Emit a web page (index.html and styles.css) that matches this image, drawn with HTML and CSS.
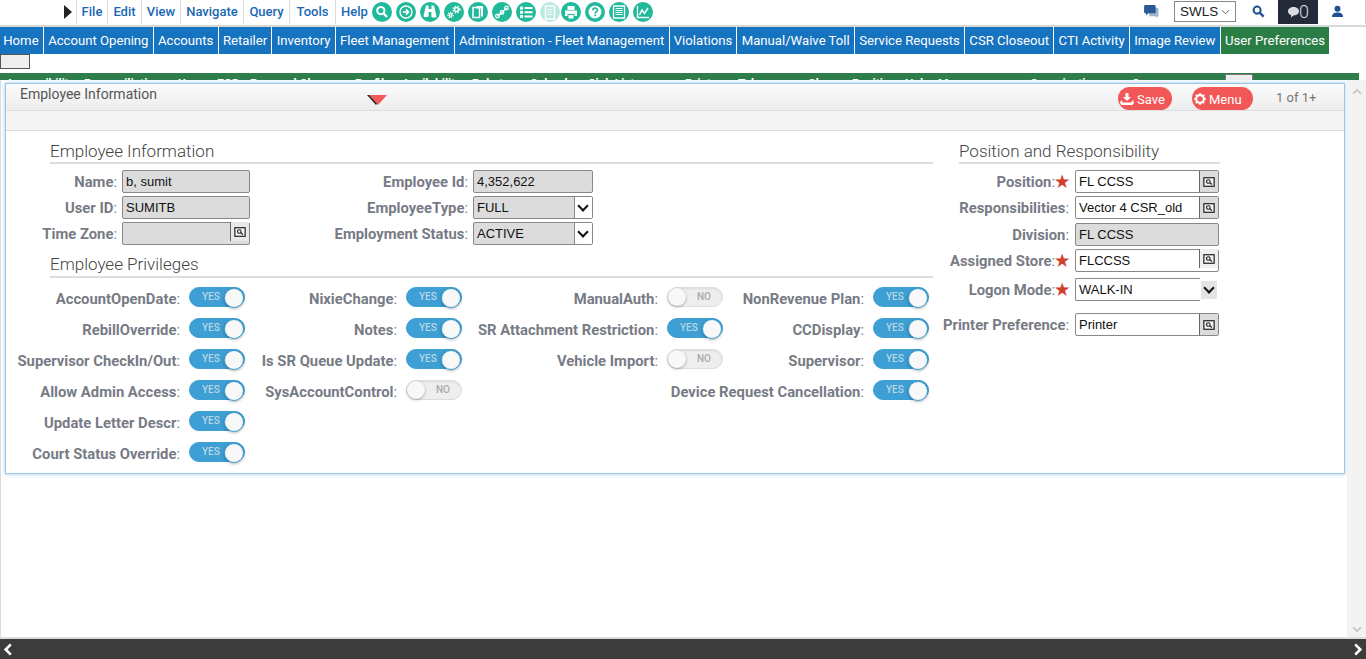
FILE: index.html
```html
<!DOCTYPE html>
<html lang="en">
<head>
  <meta charset="UTF-8" />
  <title>Employee Information</title>
  <link rel="stylesheet" href="styles.css">
</head>
<body>
  <svg class="sprites" aria-hidden="true">
    <symbol id="ic-look" viewBox="0 0 14 14">
      <rect x="1" y="2" width="12" height="10" fill="#f4f4f4" stroke="#222" stroke-width="1.4"/>
      <circle cx="6.2" cy="6.4" r="2.1" fill="none" stroke="#222" stroke-width="1.3"/>
      <path d="M8 8l2.4 2" stroke="#222" stroke-width="1.5"/>
    </symbol>
  </svg>

  <header class="toolbar">
    <span class="run-arrow"></span>
    <ul class="file-menu">
      <li>File</li><li>Edit</li><li>View</li><li>Navigate</li><li>Query</li><li>Tools</li><li>Help</li>
    </ul>
    <div class="tool-icons">
      <svg class="tool" viewBox="0 0 20 20"><circle cx="10" cy="10" r="10"/><circle cx="8.8" cy="8.6" r="3.6" fill="none" stroke="#fff" stroke-width="2"/><path d="M11.5 11.4l3.6 3.6" stroke="#fff" stroke-width="2.4"/></svg>
      <svg class="tool" viewBox="0 0 20 20"><circle cx="10" cy="10" r="10"/><circle cx="10" cy="10" r="6" fill="none" stroke="#fff" stroke-width="1.4"/><path d="M6.8 10h5.4M10 7.4l2.6 2.6-2.6 2.6" fill="none" stroke="#fff" stroke-width="1.5"/></svg>
      <svg class="tool" viewBox="0 0 20 20"><circle cx="10" cy="10" r="10"/><path d="M6 3.5h2.6v3.4h2.8V3.500H14l2.400 10.500c.2 1-.4 1.500-1.200 1.500h-2.700c-.8 0-1.100-.5-1.100-1.200V10H8.600v3.800c0 .7-.3 1.200-1.100 1.200H4.800c-.8 0-1.400-.5-1.200-1.500z" fill="#fff"/></svg>
      <svg class="tool" viewBox="0 0 20 20"><circle cx="10" cy="10" r="10"/><circle cx="12.5" cy="7.5" r="2" fill="none" stroke="#fff" stroke-width="1.6"/><circle cx="12.5" cy="7.5" r="3.4" fill="none" stroke="#fff" stroke-width="1.4" stroke-dasharray="1.4 1.4"/><circle cx="6.5" cy="13" r="1.4" fill="none" stroke="#fff" stroke-width="1.3"/><circle cx="6.5" cy="13" r="2.6" fill="none" stroke="#fff" stroke-width="1.2" stroke-dasharray="1.2 1.1"/></svg>
      <svg class="tool" viewBox="0 0 20 20"><circle cx="10" cy="10" r="10"/><path d="M5 5.500h6.500v10H5z" fill="none" stroke="#fff" stroke-width="1.5"/><path d="M8.500 4H15v10.500h-2V6.500H8.500z" fill="#fff"/></svg>
      <svg class="tool" viewBox="0 0 20 20"><circle cx="10" cy="10" r="10"/><path d="M5.500 14l4-3 2-2 3-3" stroke="#fff" stroke-width="1.2"/><circle cx="5.500" cy="14" r="1.800" fill="none" stroke="#fff" stroke-width="1.3"/><circle cx="10" cy="10.500" r="1.800" fill="none" stroke="#fff" stroke-width="1.3"/><circle cx="14.500" cy="6" r="1.800" fill="none" stroke="#fff" stroke-width="1.3"/></svg>
      <svg class="tool" viewBox="0 0 20 20"><circle cx="10" cy="10" r="10"/><path d="M4 4.500h3v3H4zM4 8.700h3v3H4zM4 13h3v3H4zM8.500 5h8v2h-8zM8.500 9.200h8v2h-8zM8.500 13.500h8v2h-8z" fill="#fff"/></svg>
      <svg class="tool tool-off" viewBox="0 0 20 20"><circle cx="10" cy="10" r="10"/><path d="M5.500 4h9v13h-9z" fill="none" stroke="#fff" stroke-width="1.4"/><path d="M7.500 7.500h5M7.500 10h5M7.500 12.500h5" stroke="#fff"/></svg>
      <svg class="tool tool-tight" viewBox="0 0 20 20"><circle cx="10" cy="10" r="10"/><path d="M6.500 4h7v4h-7zM4 8.500h12V14h-2.500v-2h-7v2H4zM7.500 13h5v3.500h-5z" fill="#fff"/></svg>
      <svg class="tool" viewBox="0 0 20 20"><circle cx="10" cy="10" r="10"/><circle cx="10" cy="10" r="6.500" fill="#fff"/><path d="M7.800 8.300c0-3 4.600-3 4.600-.1 0 1.700-2.200 1.700-2.200 3.300" fill="none" stroke="#20b99a" stroke-width="1.7"/><path d="M9.300 12.500h1.800v1.700H9.300z" fill="#20b99a"/></svg>
      <svg class="tool" viewBox="0 0 20 20"><circle cx="10" cy="10" r="10"/><path d="M4.500 4h11v12h-11z" fill="none" stroke="#fff" stroke-width="1.3"/><path d="M6.500 6.500h7M6.500 8.500h7M6.500 10.500h7M6.500 12.500h7" stroke="#fff" stroke-width="1.1"/></svg>
      <svg class="tool" viewBox="0 0 20 20"><circle cx="10" cy="10" r="10"/><path d="M4.500 4v11.500H16" fill="none" stroke="#fff" stroke-width="1.3"/><path d="M6.500 13L9 8l2.500 3.500L15 6" fill="none" stroke="#fff" stroke-width="1.5"/></svg>
    </div>
    <div class="tool-right">
      <svg class="chat-ic" viewBox="0 0 16 14"><path d="M4 3h10a1.500 1.500 0 0 1 1.500 1.500v6c0 .8-.5 1.300-1 1.500v2L12 12H6z" fill="#9db4cc"/><path d="M1.500 0H11a1.500 1.500 0 0 1 1.500 1.500v6A1.500 1.500 0 0 1 11 9H4.500L2 11.200V9h-.5A1.500 1.500 0 0 1 0 7.500v-6A1.500 1.500 0 0 1 1.500 0z" fill="#2a5a94"/></svg>
      <div class="site-select"><span>SWLS</span><svg viewBox="0 0 10 6"><path d="M1 1l4 4 4-4" fill="none" stroke="#555"/></svg></div>
      <svg class="find-ic" viewBox="0 0 14 14"><circle cx="5.500" cy="5.500" r="3.800" fill="none" stroke="#1f5190" stroke-width="2.2"/><path d="M8.500 8.500l4 4" stroke="#1f5190" stroke-width="2.6"/></svg>
      <div class="msg-box"><svg viewBox="0 0 12 12"><path d="M6.500 1C9.500 1 12 2.800 12 5.200S9.500 9.400 6.500 9.400L4 11.500V9C2 8.400 1 6.900 1 5.200 1 2.800 3.500 1 6.500 1z" fill="#d8dce2"/></svg><span>0</span></div>
      <svg class="user-ic" viewBox="0 0 14 14"><circle cx="7" cy="4" r="3.200" fill="#1f5190"/><path d="M1 13c0-3.500 2.500-5 6-5s6 1.500 6 5z" fill="#1f5190"/></svg>
    </div>
  </header>

  <nav class="main-nav">
    <a>Home</a><a>Account Opening</a><a>Accounts</a><a>Retailer</a><a>Inventory</a><a>Fleet Management</a><a>Administration - Fleet Management</a><a>Violations</a><a>Manual/Waive Toll</a><a>Service Requests</a><a>CSR Closeout</a><a>CTI Activity</a><a>Image Review</a><a class="active">User Preferences</a>
  </nav>
  <div class="nav-extra"><button class="more-btn" type="button"></button></div>
  <div class="sub-nav">
    <span>Accessibility</span><span>Reconciliation</span><span>User</span><span>EOD</span><span>Reversal Charge</span><span>Profile</span><span>Availability</span><span>Rebates</span><span>Calendar</span><span>Sink List</span><span>Printer</span><span>Tabs</span><span>Charge</span><span>Position</span><span>Help</span><span>Messages</span><span>Organization</span><span>Summary</span><i class="sub-more"></i>
  </div>

  <div class="work-area">
    <main class="content">
      <section class="panel">
        <div class="panel-head">
          <h2>Employee Information</h2>
          <span class="collapse-mark"></span>
          <button class="pill pill-save" type="button">
            <svg viewBox="0 0 14 14"><path d="M5.500 1h3v4H11L7 9 3 5h2.500zM1 8l2 2.500h8L13 8l1 3-1.500 2h-11L0 11z" fill="#fff"/></svg>Save
          </button>
          <button class="pill pill-menu" type="button">
            <svg viewBox="0 0 14 14"><circle cx="7" cy="7" r="4.500" fill="none" stroke="#fff" stroke-width="2.6"/><path d="M7 0v14M0 7h14M2 2l10 10M12 2L2 12" stroke="#fff" stroke-width="1.8" stroke-dasharray="2.2 9.6 2.2"/></svg>Menu
          </button>
          <span class="pager">1 of 1+</span>
        </div>
        <div class="panel-strip"></div>

        <div class="panel-body">
          <div class="col-main">
            <h3 class="sec-title">Employee Information</h3>
            <div class="info-grid">
              <label class="fld-label">Name<i>:</i></label>
              <div class="field ro">b, sumit</div>
              <label class="fld-label">Employee Id<i>:</i></label>
              <div class="field ro">4,352,622</div>

              <label class="fld-label">User ID<i>:</i></label>
              <div class="field ro">SUMITB</div>
              <label class="fld-label">EmployeeType<i>:</i></label>
              <div class="field ro has-drop">FULL<span class="drop"></span></div>

              <label class="fld-label">Time Zone<i>:</i></label>
              <div class="field ro has-look look-raised"><span class="look"><svg><use href="#ic-look"/></svg></span></div>
              <label class="fld-label">Employment Status<i>:</i></label>
              <div class="field ro has-drop">ACTIVE<span class="drop"></span></div>
            </div>

            <h3 class="sec-title sec-priv">Employee Privileges</h3>
            <div class="priv-grid">
              <label class="fld-label">AccountOpenDate<i>:</i></label><span class="switch on"><b>YES</b></span>
              <label class="fld-label">NixieChange<i>:</i></label><span class="switch on"><b>YES</b></span>
              <label class="fld-label">ManualAuth<i>:</i></label><span class="switch"><b>NO</b></span>
              <label class="fld-label">NonRevenue Plan<i>:</i></label><span class="switch on"><b>YES</b></span>

              <label class="fld-label">RebillOverride<i>:</i></label><span class="switch on"><b>YES</b></span>
              <label class="fld-label">Notes<i>:</i></label><span class="switch on"><b>YES</b></span>
              <label class="fld-label">SR Attachment Restriction<i>:</i></label><span class="switch on"><b>YES</b></span>
              <label class="fld-label">CCDisplay<i>:</i></label><span class="switch on"><b>YES</b></span>

              <label class="fld-label">Supervisor CheckIn/Out<i>:</i></label><span class="switch on"><b>YES</b></span>
              <label class="fld-label">Is SR Queue Update<i>:</i></label><span class="switch on"><b>YES</b></span>
              <label class="fld-label">Vehicle Import<i>:</i></label><span class="switch"><b>NO</b></span>
              <label class="fld-label">Supervisor<i>:</i></label><span class="switch on"><b>YES</b></span>

              <label class="fld-label">Allow Admin Access<i>:</i></label><span class="switch on"><b>YES</b></span>
              <label class="fld-label">SysAccountControl<i>:</i></label><span class="switch"><b>NO</b></span>
              <label class="fld-label wide-label">Device Request Cancellation<i>:</i></label><span class="switch on"><b>YES</b></span>

              <label class="fld-label">Update Letter Descr<i>:</i></label><span class="switch on row-end"><b>YES</b></span>
              <label class="fld-label">Court Status Override<i>:</i></label><span class="switch on row-end"><b>YES</b></span>
            </div>
          </div>

          <div class="col-side">
            <h3 class="sec-title">Position and Responsibility</h3>
            <div class="side-grid">
              <label class="fld-label req">Position<i>:</i><em>★</em></label>
              <div class="field has-look">FL CCSS<span class="look"><svg><use href="#ic-look"/></svg></span></div>

              <label class="fld-label">Responsibilities<i>:</i></label>
              <div class="field has-look">Vector 4 CSR_old<span class="look"><svg><use href="#ic-look"/></svg></span></div>

              <label class="fld-label gap-div">Division<i>:</i></label>
              <div class="field ro gap-div">FL CCSS</div>

              <label class="fld-label req">Assigned Store<i>:</i><em>★</em></label>
              <div class="field has-look look-raised">FLCCSS<span class="look"><svg><use href="#ic-look"/></svg></span></div>

              <label class="fld-label req gap-logon">Logon Mode<i>:</i><em>★</em></label>
              <div class="field-logon gap-logon"><div class="field open-right">WALK-IN</div><span class="logon-drop"></span></div>

              <label class="fld-label gap-printer">Printer Preference<i>:</i></label>
              <div class="field has-look gap-printer">Printer<span class="look"><svg><use href="#ic-look"/></svg></span></div>
            </div>
          </div>
        </div>
      </section>
    </main>
    <aside class="scroll-rail">
      <svg viewBox="0 0 12 8"><path d="M1.500 6.500L6 2l4.500 4.500" fill="none" stroke="#c4c4c4" stroke-width="2"/></svg>
      <svg viewBox="0 0 12 8"><path d="M1.500 1.500L6 6l4.500-4.500" fill="none" stroke="#c4c4c4" stroke-width="2"/></svg>
    </aside>
  </div>

  <footer class="foot-bar">
    <svg viewBox="0 0 10 14"><path d="M8 1.500L2.500 7 8 12.500" fill="none" stroke="#fff" stroke-width="2.8"/></svg>
    <svg viewBox="0 0 10 14"><path d="M2 1.500L7.500 7 2 12.500" fill="none" stroke="#fff" stroke-width="2.8"/></svg>
  </footer>
</body>
</html>
```

FILE: styles.css
```css
* {
  box-sizing: border-box;
}
html, body {
  height: 100%;
}
body {
  margin: 0;
  display: flex;
  flex-direction: column;
  overflow: hidden;
  background-color: white;
  font-family: Roboto, "Liberation Sans", sans-serif;
  color: #333;
}
.sprites {
  display: none;
}

/* top toolbar */
.toolbar {
  display: flex;
  align-items: center;
  height: 27px;
  flex: none;
  padding-bottom: 2px;
  border-bottom: 2px solid #d8d8d8;
}
.run-arrow {
  width: 0;
  height: 0;
  margin-left: 64px;
  border-left: 8px solid #222;
  border-top: 7px solid transparent;
  border-bottom: 7px solid transparent;
}
.file-menu {
  display: flex;
  margin: 0 0 0 4px;
  padding: 0;
  list-style: none;
  height: 25px;
}
.file-menu li {
  display: flex;
  align-items: center;
  justify-content: center;
  border-left: 1px solid #ddd;
  font-size: 13px;
  font-weight: 500;
  color: #1a68b5;
  padding: 0 4px;
}
.file-menu li:nth-child(1) { width: 31px; }
.file-menu li:nth-child(2) { width: 34px; }
.file-menu li:nth-child(3) { width: 39px; }
.file-menu li:nth-child(4) { width: 63px; }
.file-menu li:nth-child(5) { width: 46px; }
.file-menu li:nth-child(6) { width: 46px; }
.file-menu li:nth-child(7) { width: 38px; }
.tool-icons {
  display: flex;
  gap: 4px;
  margin-left: -1px;
}
.tool {
  width: 20px;
  height: 20px;
  fill: #20b99a;
}
.tool-off {
  opacity: 0.3;
}
.tool-tight {
  margin-left: -3px;
}
.tool-right {
  display: flex;
  align-items: center;
  margin-left: auto;
  height: 25px;
  padding-right: 6px;
  border-right: 1px solid #ccc;
}
.chat-ic {
  width: 15px;
  height: 13px;
  margin-right: 15px;
}
.site-select {
  display: flex;
  align-items: center;
  justify-content: space-between;
  width: 62px;
  height: 21px;
  padding: 0 5px;
  border: 1px solid #888;
  font-family: "Liberation Sans", sans-serif;
  font-size: 13.5px;
  color: #222;
}
.site-select svg {
  width: 9px;
  height: 6px;
}
.find-ic {
  width: 13px;
  height: 13px;
  margin: 0 13px 0 16px;
}
.msg-box {
  display: flex;
  align-items: center;
  justify-content: center;
  width: 40px;
  height: 25px;
  background-color: #232b3b;
  color: #d8dce2;
  font-size: 18px;
  font-weight: 300;
}
.msg-box svg {
  width: 12px;
  height: 12px;
}
.user-ic {
  width: 13px;
  height: 13px;
  margin: 0 15px 0 13px;
}

/* main navigation */
.main-nav {
  display: flex;
  height: 27px;
  flex: none;
}
.main-nav a {
  display: flex;
  align-items: center;
  padding: 0 4.25px;
  border-right: 1px solid white;
  background-color: #1673c0;
  color: white;
  font-size: 13.15px;
  white-space: nowrap;
}
.main-nav a:first-child {
  padding-left: 3.25px;
}
.main-nav a.active {
  background-color: #2b7d46;
}
.nav-extra {
  height: 19px;
  flex: none;
}
.more-btn {
  display: block;
  width: 30px;
  height: 15px;
  padding: 0;
  border: 1px solid #555;
  background-color: #eee;
}
.sub-nav {
  display: grid;
  grid-template-columns: 78px 94px 39px 33px 105px 47px 70px 58px 58px 97px 53px 70px 44px 53px 33px 92px 102px 93px 28px;
  height: 7px;
  flex: none;
  margin-right: 7px;
  padding: 4px 0 0 6px;
  overflow: hidden;
  background-color: #2e7d4a;
  color: white;
  font-size: 12px;
  font-weight: 700;
  line-height: 14px;
  white-space: nowrap;
}
.sub-nav span {
  height: 3px;
  overflow: hidden;
}
.sub-more {
  display: block;
  height: 14px;
  margin-top: -3px;
  background-color: #eee;
  border: 1px solid #777;
}

/* work area */
.work-area {
  display: flex;
  flex: 1;
  min-height: 0;
}
.content {
  flex: 1;
  padding: 3px 2px 0 4px;
  border-left: 1px solid #ddd;
  border-bottom: 2px solid #ddd;
}
.panel {
  height: 391px;
  background-color: white;
  border: 1px solid #9cc6e8;
  box-shadow: 0 0 4px rgba(90, 160, 220, 0.6);
}
.panel-head {
  display: flex;
  align-items: flex-start;
  height: 27px;
  padding-top: 3px;
  border-bottom: 1px solid #ddd;
  background: linear-gradient(#fbfbfb, #ededed);
}
.panel-head h2 {
  margin: -1px 0 0 14px;
  font-size: 14px;
  font-weight: 400;
  color: #555;
}
.collapse-mark {
  width: 0;
  height: 0;
  margin: 8px 0 0 212px;
  border-left: 9px solid transparent;
  border-right: 9px solid transparent;
  border-top: 10px solid #f25b5b;
  filter: drop-shadow(-2px 0 0 #222);
}
.pill {
  display: flex;
  align-items: center;
  gap: 3px;
  height: 23px;
  padding: 1px 0 0 2px;
  border: none;
  border-radius: 12px;
  background-color: #f25757;
  color: white;
  font-family: Roboto, sans-serif;
  font-size: 13px;
}
.pill-save {
  width: 54px;
  margin-left: 731px;
}
.pill-save svg {
  width: 14px;
  height: 14px;
}
.pill-menu {
  width: 61px;
  margin-left: 20px;
}
.pill-menu svg {
  width: 12px;
  height: 12px;
}
.pager {
  margin: 3px 0 0 23px;
  font-size: 13px;
  color: #777;
}
.panel-strip {
  height: 20px;
  background-color: #f5f5f5;
  border-bottom: 1px solid #ddd;
}
.panel-body {
  display: flex;
}
.col-main {
  width: 927px;
}
.col-side {
  width: 261px;
  margin-left: 26px;
}
.sec-title {
  height: 33px;
  margin: 0 0 6px;
  padding-top: 10px;
  border-bottom: 2px solid #ddd;
  font-size: 17px;
  font-weight: 300;
  line-height: 20px;
  color: #444;
}
.col-main .sec-title {
  margin-left: 44px;
}
.sec-priv {
  height: 29px;
  margin-top: 4px;
  padding-top: 5px;
  margin-bottom: 9px;
}
.fld-label {
  display: block;
  font-size: 14.8px;
  font-weight: 700;
  color: #777b85;
  text-align: right;
  white-space: nowrap;
}
.fld-label i {
  font-style: normal;
  font-weight: 400;
}
.fld-label em {
  font-style: normal;
  color: #d0402f;
  font-size: 16px;
  line-height: 14px;
}
.info-grid {
  display: grid;
  grid-template-columns: 111px 128px 213px 120px;
  grid-auto-rows: 23px;
  row-gap: 3px;
  column-gap: 5px;
  align-items: center;
}
.field {
  position: relative;
  height: 23px;
  padding: 0 3px;
  border: 1px solid #888;
  border-radius: 2px;
  background-color: white;
  font-family: "Liberation Sans", sans-serif;
  font-size: 13px;
  line-height: 22px;
  color: #111;
}
.field.ro {
  background-color: #dcdcdc;
}
.look {
  position: absolute;
  top: 0;
  right: 0;
  bottom: 0;
  width: 19px;
  display: flex;
  align-items: center;
  justify-content: center;
  border-left: 1px solid #666;
  background-color: #dcdcdc;
}
.look svg {
  width: 12px;
  height: 12px;
}
.look-raised .look {
  top: -1px;
  bottom: 3px;
  background-color: #efefef;
}
.field.ro .look {
  background-color: #e8e8e8;
}
.drop {
  position: absolute;
  top: 0;
  right: 0;
  bottom: 0;
  width: 18px;
  border-left: 1px solid #888;
  background-color: white;
}
.drop::after {
  content: "";
  position: absolute;
  left: 4px;
  top: 5px;
  width: 6px;
  height: 6px;
  border-right: 2px solid #111;
  border-bottom: 2px solid #111;
  transform: rotate(45deg);
}
.priv-grid {
  display: grid;
  grid-template-columns: 183px 56px 161px 56px 205px 56px 150px 56px;
  grid-auto-rows: 31px;
  align-items: start;
}
.priv-grid .fld-label {
  padding: 3px 9px 0 0;
}
.wide-label {
  grid-column: 5 / 8;
}
.row-end {
  grid-column: 2 / 9;
  justify-self: start;
}
.switch {
  position: relative;
  display: block;
  width: 56px;
  height: 20px;
  border: 1px solid #ddd;
  border-radius: 10px;
  background-color: #eeeeee;
  box-shadow: inset 0 1px 2px rgba(0, 0, 0, 0.08);
}
.switch b {
  position: absolute;
  top: 0;
  right: 11px;
  font-size: 10px;
  font-weight: 500;
  line-height: 18px;
  color: #aaa;
}
.switch::after {
  content: "";
  position: absolute;
  top: 0;
  left: 0;
  width: 18px;
  height: 18px;
  border-radius: 50%;
  background-color: #f8f8f8;
  box-shadow: 0 1px 3px rgba(0, 0, 0, 0.3);
}
.switch.on {
  border-color: #3d9fd3;
  background-color: #3d9fd3;
  box-shadow: none;
}
.switch.on b {
  left: 12px;
  right: auto;
  color: #b9d6e6;
}
.switch.on::after {
  left: auto;
  right: 0;
  border: 1px solid #3d9fd3;
}
.side-grid {
  display: grid;
  grid-template-columns: 115px 144px;
  column-gap: 6px;
  row-gap: 3px;
  margin-left: -5px;
  width: 266px;
  align-items: center;
}
.side-grid .fld-label {
  margin-left: -30px;
}
.side-grid .gap-div {
  margin-top: 1px;
}
.side-grid .gap-logon {
  margin-top: 3px;
}
.side-grid .gap-printer {
  margin-top: 9px;
}
.field-logon {
  display: flex;
  align-items: center;
}
.open-right {
  width: 125px;
  border-right: none;
  border-radius: 2px 0 0 2px;
}
.logon-drop {
  position: relative;
  width: 16px;
  height: 18px;
  margin-left: 1px;
  background-color: #e4e4e4;
}
.logon-drop::after {
  content: "";
  position: absolute;
  left: 4px;
  top: 3px;
  width: 6px;
  height: 6px;
  border-right: 2px solid #111;
  border-bottom: 2px solid #111;
  transform: rotate(45deg);
}

/* page scrollbar and footer */
.scroll-rail {
  display: flex;
  flex-direction: column;
  justify-content: space-between;
  align-items: center;
  width: 19px;
  flex: none;
  padding: 8px 0 4px;
  background-color: #f3f3f3;
  border-bottom: 2px solid #ddd;
}
.scroll-rail svg {
  width: 10px;
  height: 7px;
}
.foot-bar {
  display: flex;
  align-items: center;
  justify-content: space-between;
  height: 20px;
  flex: none;
  padding: 0 3px;
  background-color: #3c3c3c;
}
.foot-bar svg {
  width: 10px;
  height: 13px;
}
```
